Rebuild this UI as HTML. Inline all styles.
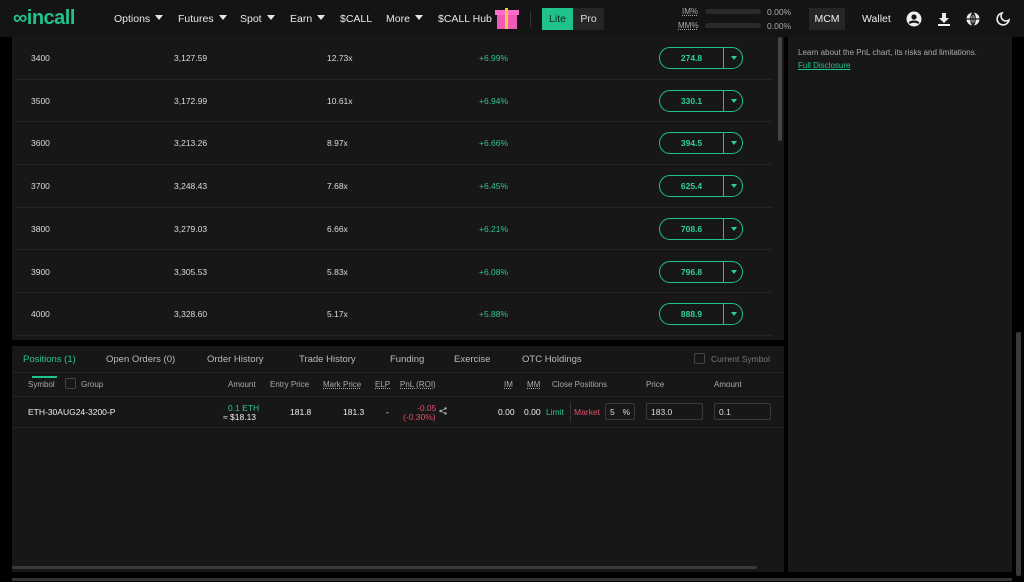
<!DOCTYPE html>
<html><head><meta charset="utf-8"><style>
*{box-sizing:border-box;margin:0;padding:0}
body{width:1024px;height:582px;background:#000;font-family:"Liberation Sans",sans-serif;color:#ddd;position:relative;overflow:hidden;font-size:9px}
.hdr{position:absolute;left:0;top:0;width:1024px;height:37px;background:#141414}
.abs{position:absolute;white-space:nowrap}
.nav{font-size:10.5px;color:#e8e8e8;top:13px}
.tri{display:inline-block;border-left:4px solid transparent;border-right:4px solid transparent;border-top:5px solid #e8e8e8;margin-left:5px;vertical-align:2px}
.lp{position:absolute;left:12px;top:37px;width:772px;height:303px;background:#171717;overflow:hidden}
.row{position:absolute;left:5px;width:755px;height:42.7px;border-bottom:1.5px solid #262626}
.row span{position:absolute;top:16px;font-size:8.5px;color:#ddd}
.btn{position:absolute;left:642px;top:10px;width:84px;height:22px;border:1.3px solid #1fc28a;border-radius:11px}
.btn b{position:absolute;left:0;width:63px;top:5px;text-align:center;color:#2fd196;font-size:8.5px;font-weight:bold}
.btn i{position:absolute;left:63px;top:0;height:20px;border-left:1.3px solid #1fc28a}
.btn u{position:absolute;left:71px;top:8px;border-left:3.5px solid transparent;border-right:3.5px solid transparent;border-top:4px solid #2fd196}
.bp{position:absolute;left:12px;top:346px;width:772px;height:226px;background:#171717}
.rp{position:absolute;left:788px;top:37px;width:224px;height:535px;background:#171717}
.tab{font-size:9.5px;color:#bbb;top:8px}
.th{font-size:8px;color:#aaa;top:34px}
.inp{position:absolute;top:57px;height:17px;border:1px solid #3a3a3a;border-radius:2px;font-size:8.5px;color:#ddd;padding:3px 4px}
</style></head><body>
<div class="hdr">
 <div class="abs" style="left:13px;top:7px;font-size:20px;color:#1fc28a;font-weight:bold;letter-spacing:-0.5px">∞incall</div>
 <div class="abs nav" style="left:114px">Options<span class="tri"></span></div>
 <div class="abs nav" style="left:178px">Futures<span class="tri"></span></div>
 <div class="abs nav" style="left:240px">Spot<span class="tri"></span></div>
 <div class="abs nav" style="left:290px">Earn<span class="tri"></span></div>
 <div class="abs nav" style="left:340px">$CALL</div>
 <div class="abs nav" style="left:386px">More<span class="tri"></span></div>
 <div class="abs nav" style="left:438px">$CALL Hub</div>
 <div class="abs" style="left:497px;top:13px;width:20px;height:16px;background:#f05ab8"></div>
 <div class="abs" style="left:495px;top:10px;width:24px;height:5px;background:#ff6ccb"></div>
 <div class="abs" style="left:505px;top:8px;width:3px;height:21px;background:#f5c842"></div>
 <div class="abs" style="left:530px;top:11px;width:1px;height:16px;background:#333"></div>
 <div class="abs" style="left:542px;top:8px;width:31px;height:22px;background:#1fc28a;color:#0c2b20;font-size:10.5px;text-align:center;line-height:22px">Lite</div>
 <div class="abs" style="left:573px;top:8px;width:31px;height:22px;background:#262626;color:#ddd;font-size:10.5px;text-align:center;line-height:22px">Pro</div>
 <div class="abs" style="left:682px;top:7px;font-size:8px;color:#aaa;text-decoration:underline dotted">IM%</div>
 <div class="abs" style="left:678px;top:21px;font-size:8px;color:#aaa;text-decoration:underline dotted">MM%</div>
 <div class="abs" style="left:705px;top:9px;width:56px;height:5px;border-radius:3px;background:#2a2a2a"></div>
 <div class="abs" style="left:705px;top:23px;width:56px;height:5px;border-radius:3px;background:#2a2a2a"></div>
 <div class="abs" style="left:767px;top:7px;font-size:8.5px;color:#aaa">0.00%</div>
 <div class="abs" style="left:767px;top:21px;font-size:8.5px;color:#aaa">0.00%</div>
 <div class="abs" style="left:809px;top:8px;width:36px;height:22px;background:#262626;font-size:10.5px;color:#eee;text-align:center;line-height:22px">MCM</div>
 <div class="abs" style="left:862px;top:13px;font-size:10.5px;color:#eee">Wallet</div>
 <svg class="abs" style="left:906px;top:11px" width="16" height="16" viewBox="0 0 16 16"><circle cx="8" cy="8" r="7.5" fill="#eee"/><circle cx="8" cy="6" r="2.6" fill="#141414"/><path d="M3.5 12.5c1-2.5 8-2.5 9 0" stroke="#141414" stroke-width="2.2" fill="none"/></svg>
 <svg class="abs" style="left:937px;top:12px" width="14" height="14" viewBox="0 0 14 14"><path d="M5 1h4v5h3l-5 5-5-5h3z" fill="#eee"/><rect x="1" y="12" width="12" height="2" fill="#eee"/></svg>
 <svg class="abs" style="left:966px;top:12px" width="14" height="14" viewBox="0 0 14 14"><circle cx="7" cy="7" r="6.5" fill="#eee"/><path d="M7 .5v13M.5 7h13M7 .5c-3 3-3 10 0 13M7 .5c3 3 3 10 0 13" stroke="#141414" stroke-width="1.2" fill="none"/></svg>
 <svg class="abs" style="left:996px;top:12px" width="14" height="14" viewBox="0 0 14 14"><path d="M6 1a6 6 0 1 0 7 7 5 5 0 0 1-7-7z" stroke="#eee" stroke-width="1.6" fill="none"/></svg>
</div>

<div class="lp">
 <div class="row" style="top:0"><span style="left:14px">3400</span><span style="left:157px">3,127.59</span><span style="left:310px">12.73x</span><span style="left:462px;color:#2fc48d">+6.99%</span><div class="btn"><b>274.8</b><i></i><u></u></div></div>
 <div class="row" style="top:42.7px"><span style="left:14px">3500</span><span style="left:157px">3,172.99</span><span style="left:310px">10.61x</span><span style="left:462px;color:#2fc48d">+6.94%</span><div class="btn"><b>330.1</b><i></i><u></u></div></div>
 <div class="row" style="top:85.4px"><span style="left:14px">3600</span><span style="left:157px">3,213.26</span><span style="left:310px">8.97x</span><span style="left:462px;color:#2fc48d">+6.66%</span><div class="btn"><b>394.5</b><i></i><u></u></div></div>
 <div class="row" style="top:128.1px"><span style="left:14px">3700</span><span style="left:157px">3,248.43</span><span style="left:310px">7.68x</span><span style="left:462px;color:#2fc48d">+6.45%</span><div class="btn"><b>625.4</b><i></i><u></u></div></div>
 <div class="row" style="top:170.8px"><span style="left:14px">3800</span><span style="left:157px">3,279.03</span><span style="left:310px">6.66x</span><span style="left:462px;color:#2fc48d">+6.21%</span><div class="btn"><b>708.6</b><i></i><u></u></div></div>
 <div class="row" style="top:213.5px"><span style="left:14px">3900</span><span style="left:157px">3,305.53</span><span style="left:310px">5.83x</span><span style="left:462px;color:#2fc48d">+6.08%</span><div class="btn"><b>796.8</b><i></i><u></u></div></div>
 <div class="row" style="top:256.2px"><span style="left:14px">4000</span><span style="left:157px">3,328.60</span><span style="left:310px">5.17x</span><span style="left:462px;color:#2fc48d">+5.88%</span><div class="btn"><b>888.9</b><i></i><u></u></div></div>
 <div class="abs" style="left:766px;top:0;width:4px;height:104px;background:#444;border-radius:2px"></div>
</div>

<div class="bp">
 <div class="abs tab" style="left:11px;color:#2fc48d">Positions (1)</div>
 <div class="abs" style="left:20px;top:30px;width:25px;height:1.5px;background:#1fc28a"></div>
 <div class="abs tab" style="left:94px">Open Orders (0)</div>
 <div class="abs tab" style="left:195px">Order History</div>
 <div class="abs tab" style="left:287px">Trade History</div>
 <div class="abs tab" style="left:378px">Funding</div>
 <div class="abs tab" style="left:442px">Exercise</div>
 <div class="abs tab" style="left:510px">OTC Holdings</div>
 <div class="abs" style="left:682px;top:7px;width:11px;height:11px;border:1px solid #444;border-radius:2px"></div>
 <div class="abs" style="left:699px;top:8px;font-size:8.5px;color:#777">Current Symbol</div>
 <div class="abs" style="left:0;top:26px;width:772px;height:1px;background:#262626"></div>
 <div class="abs th" style="left:16px">Symbol</div>
 <div class="abs" style="left:53px;top:32px;width:11px;height:11px;border:1px solid #444;border-radius:2px"></div>
 <div class="abs th" style="left:69px">Group</div>
 <div class="abs th" style="left:216px">Amount</div>
 <div class="abs th" style="left:258px">Entry Price</div>
 <div class="abs th" style="left:311px;text-decoration:underline dotted">Mark Price</div>
 <div class="abs th" style="left:363px;text-decoration:underline dotted">ELP</div>
 <div class="abs th" style="left:388px;text-decoration:underline dotted">PnL (ROI)</div>
 <div class="abs th" style="left:492px;text-decoration:underline dotted">IM</div>
 <div class="abs th" style="left:515px;text-decoration:underline dotted">MM</div>
 <div class="abs th" style="left:540px">Close Positions</div>
 <div class="abs th" style="left:634px">Price</div>
 <div class="abs th" style="left:702px">Amount</div>
 <div class="abs" style="left:0;top:50px;width:772px;height:1px;background:#262626"></div>
 <div class="abs" style="left:16px;top:61px;font-size:8.5px;color:#eee">ETH-30AUG24-3200-P</div>
 <div class="abs" style="left:216px;top:57px;font-size:8.5px;color:#2fc48d">0.1 ETH</div>
 <div class="abs" style="left:211px;top:66px;font-size:8.5px;color:#eee">≈ $18.13</div>
 <div class="abs" style="left:278px;top:61px;font-size:8.5px;color:#eee">181.8</div>
 <div class="abs" style="left:331px;top:61px;font-size:8.5px;color:#eee">181.3</div>
 <div class="abs" style="left:374px;top:61px;font-size:8.5px;color:#eee">-</div>
 <div class="abs" style="left:405px;top:57px;font-size:8.5px;color:#e0506a">-0.05</div>
 <div class="abs" style="left:391px;top:66px;font-size:8.5px;color:#e0506a">(-0.30%)</div>
 <svg class="abs" style="left:427px;top:61px" width="8" height="8" viewBox="0 0 8 8"><circle cx="6.5" cy="1.5" r="1.2" fill="#aaa"/><circle cx="1.5" cy="4" r="1.2" fill="#aaa"/><circle cx="6.5" cy="6.5" r="1.2" fill="#aaa"/><path d="M6.5 1.5 1.5 4 6.5 6.5" stroke="#aaa" stroke-width=".7" fill="none"/></svg>
 <div class="abs" style="left:486px;top:61px;font-size:8.5px;color:#eee">0.00</div>
 <div class="abs" style="left:512px;top:61px;font-size:8.5px;color:#eee">0.00</div>
 <div class="abs" style="left:534px;top:61px;font-size:8.5px;color:#2fc48d">Limit</div>
 <div class="abs" style="left:558px;top:56px;width:1px;height:20px;background:#333"></div>
 <div class="abs" style="left:562px;top:61px;font-size:8.5px;color:#e0506a">Market</div>
 <div class="inp" style="left:593px;width:30px">5 <span style="float:right">%</span></div>
 <div class="inp" style="left:634px;width:57px">183.0</div>
 <div class="inp" style="left:702px;width:57px">0.1</div>
 <div class="abs" style="left:0;top:81px;width:772px;height:1px;background:#262626"></div>
 <div class="abs" style="left:0;top:220px;width:745px;height:3px;background:#3a3a3a;border-radius:2px"></div>
</div>

<div class="rp">
 <div class="abs" style="left:10px;top:11px;font-size:8px;color:#aaa">Learn about the PnL chart, its risks and limitations.</div>
 <div class="abs" style="left:10px;top:24px;font-size:8px;color:#1fc28a;text-decoration:underline">Full Disclosure</div>
</div>
<div class="abs" style="left:1016px;top:332px;width:5px;height:244px;background:#3a3a3a;border-radius:2px"></div>
<div class="abs" style="left:12px;top:578px;width:1000px;height:3px;background:#333"></div>
</body></html>
